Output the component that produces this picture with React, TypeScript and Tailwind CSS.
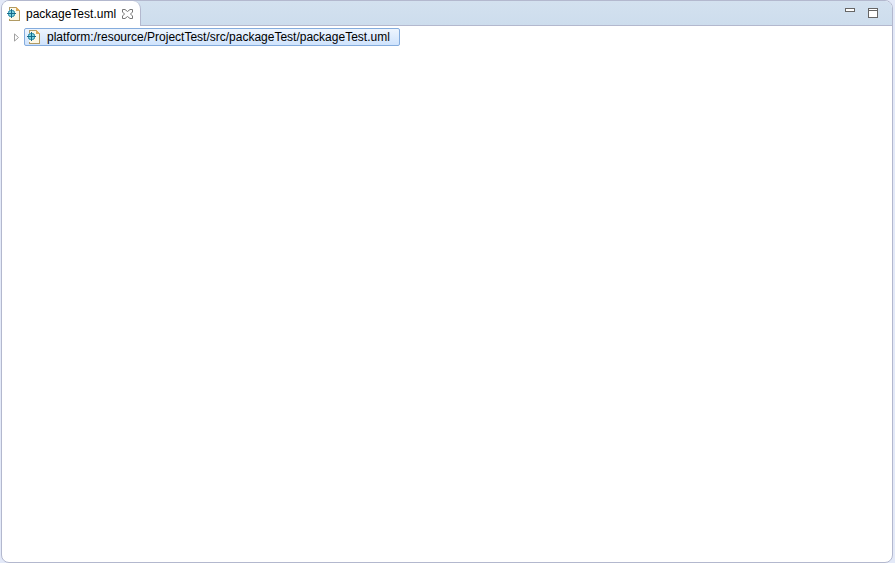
import React, { useState } from 'react';

const RESOURCE = 'platform:/resource/ProjectTest/src/packageTest/packageTest.uml';

function UmlFileIcon() {
  return (
    <svg width="14" height="14" viewBox="0 0 14 14" className="shrink-0" aria-hidden="true">
      <path d="M2 0h8l3 3v11H2z" fill="#fdf8e6" />
      <path d="M2 0h7v1H3v2H2zM12 4h1v10H2v-2h1v1h9z" fill="#b09a63" />
      <path d="M9 0h1v1h1v1h1v1h1v1H9z" fill="#d9a95b" />
      <rect x="1.5" y="3.5" width="6" height="6" rx="2" fill="#7ed3e0" stroke="#1d84a3" />
      <path d="M4 2h1v9H4zM0 6h9v1H0z" fill="#14698a" />
    </svg>
  );
}

function CloseIcon() {
  return (
    <svg width="11" height="10" viewBox="0 0 11 10" aria-hidden="true">
      <path
        d="M.5.5h2.5l2.5 2 2.5-2h2.5v2.5L8.5 5l2 2v2.5H8l-2.5-2-2.5 2H.5V7l2-2-2-2z"
        fill="#fff"
        stroke="#777"
      />
    </svg>
  );
}

export default function App() {
  const [expanded, setExpanded] = useState(false);

  return (
    <div className="flex min-h-screen flex-col bg-[#e3e9f8] pl-px pr-0.5 font-['Liberation_Sans',sans-serif] text-xs text-black">
      <main className="flex grow flex-col overflow-hidden rounded-lg border border-[#b3b8ce] bg-white">
        <header className="flex h-[25px] items-stretch justify-between border-b border-[#b3b8ce] bg-linear-to-b from-[#d3e1ef] to-[#cddded]">
          <div className="-mb-px flex items-center rounded-tr-lg border-r border-[#b3b8ce] bg-white pl-[5px] pr-[7px]">
            <UmlFileIcon />
            <span className="ml-[5px] whitespace-nowrap">packageTest.uml</span>
            <button type="button" aria-label="Close" className="ml-1.5">
              <CloseIcon />
            </button>
          </div>
          <div className="flex items-start gap-[13px] pr-3.5 pt-[7px]">
            <button type="button" aria-label="Minimize" className="h-1 w-2.5 border border-[#666] bg-white" />
            <button type="button" aria-label="Maximize" className="flex h-2.5 w-2.5 flex-col border border-[#666] bg-white">
              <span className="mt-px h-px w-full bg-[#666]" />
            </button>
          </div>
        </header>
        <ul role="tree" className="pl-[11px] pt-0.5">
          <li role="treeitem" aria-expanded={expanded} aria-selected="true" className="flex items-center gap-1">
            <button type="button" aria-label="Expand" onClick={() => setExpanded(!expanded)} className="w-[7px]">
              <svg width="7" height="9" viewBox="0 0 7 9" aria-hidden="true">
                <path d="M1.5.9v7.2l4-3.6z" fill="#fff" stroke="#a0a0a0" />
              </svg>
            </button>
            <span className="flex h-[18px] items-center gap-1.5 whitespace-nowrap rounded-xs border border-[#84acdd] bg-linear-to-b from-[#eef5fe] to-[#cfe3fc] pl-0.5 pr-[9px]">
              <UmlFileIcon />
              {RESOURCE}
            </span>
          </li>
        </ul>
      </main>
    </div>
  );
}
